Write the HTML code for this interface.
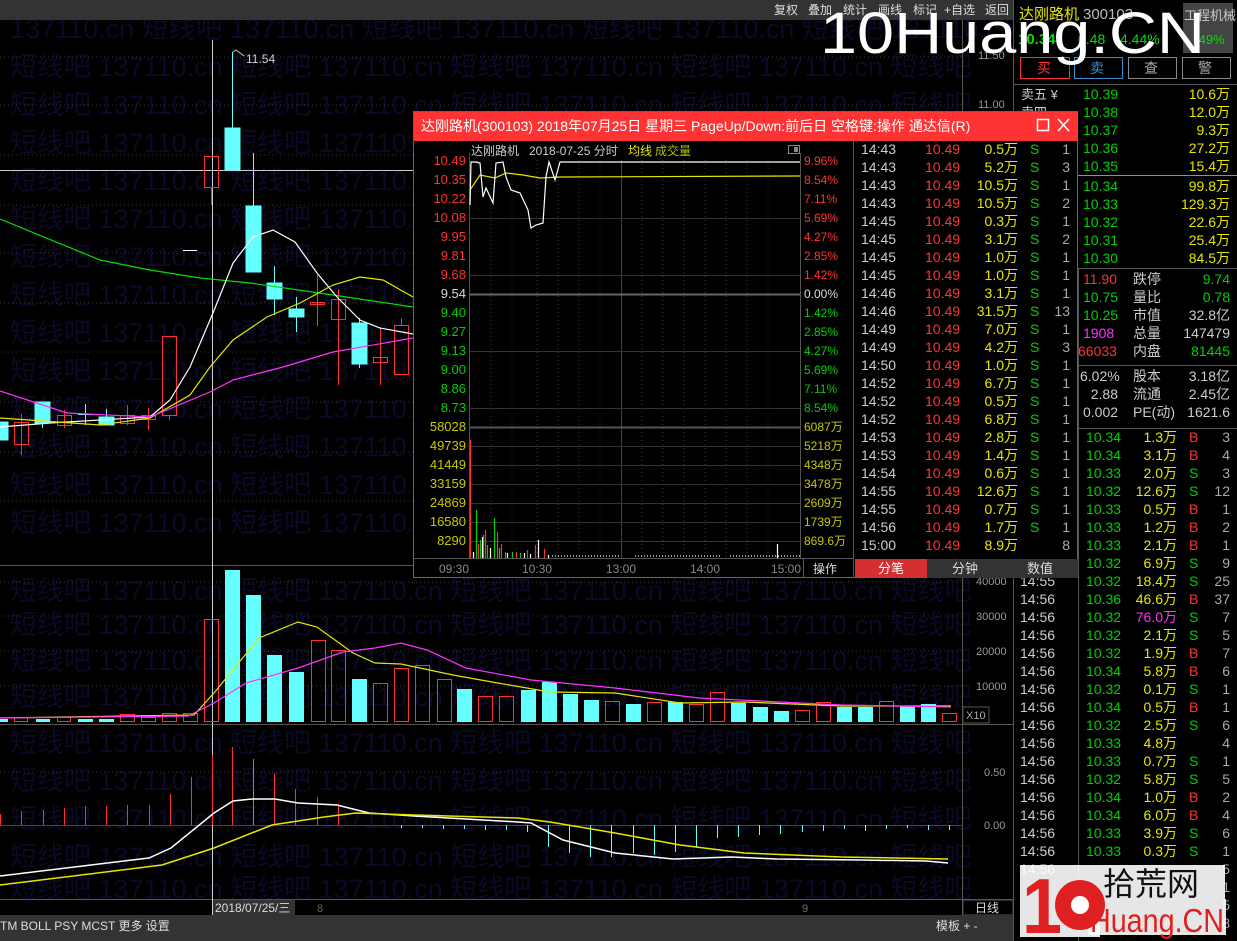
<!DOCTYPE html>
<html><head><meta charset="utf-8">
<style>
html,body{margin:0;padding:0;background:#000;width:1237px;height:941px;overflow:hidden}
svg{display:block}
text{font-family:"Liberation Sans","Noto Sans CJK SC",sans-serif}
</style></head><body>
<svg width="1237" height="941" viewBox="0 0 1237 941" xmlns="http://www.w3.org/2000/svg">
<rect width="1237" height="941" fill="#000"/>
<!-- watermark -->
<g fill="#0a0a28" font-size="27">
<text x="10" y="38">137110.cn 短线吧 137110.cn 短线吧 137110.cn 短线吧 137110.cn 短线吧 137110.cn</text>
<text x="10" y="76">短线吧 137110.cn 短线吧 137110.cn 短线吧 137110.cn 短线吧 137110.cn 短线吧</text>
<text x="10" y="114">短线吧 137110.cn 短线吧 137110.cn 短线吧 137110.cn 短线吧 137110.cn 短线吧</text>
<text x="10" y="152">短线吧 137110.cn 短线吧 137110.cn 短线吧 137110.cn 短线吧 137110.cn 短线吧</text>
<text x="10" y="190">短线吧 137110.cn 短线吧 137110.cn 短线吧 137110.cn 短线吧 137110.cn 短线吧</text>
<text x="10" y="228">短线吧 137110.cn 短线吧 137110.cn 短线吧 137110.cn 短线吧 137110.cn 短线吧</text>
<text x="10" y="266">短线吧 137110.cn 短线吧 137110.cn 短线吧 137110.cn 短线吧 137110.cn 短线吧</text>
<text x="10" y="304">短线吧 137110.cn 短线吧 137110.cn 短线吧 137110.cn 短线吧 137110.cn 短线吧</text>
<text x="10" y="342">短线吧 137110.cn 短线吧 137110.cn 短线吧 137110.cn 短线吧 137110.cn 短线吧</text>
<text x="10" y="380">短线吧 137110.cn 短线吧 137110.cn 短线吧 137110.cn 短线吧 137110.cn 短线吧</text>
<text x="10" y="418">短线吧 137110.cn 短线吧 137110.cn 短线吧 137110.cn 短线吧 137110.cn 短线吧</text>
<text x="10" y="456">短线吧 137110.cn 短线吧 137110.cn 短线吧 137110.cn 短线吧 137110.cn 短线吧</text>
<text x="10" y="494">短线吧 137110.cn 短线吧 137110.cn 短线吧 137110.cn 短线吧 137110.cn 短线吧</text>
<text x="10" y="532">短线吧 137110.cn 短线吧 137110.cn 短线吧 137110.cn 短线吧 137110.cn 短线吧</text>
<text x="10" y="600">短线吧 137110.cn 短线吧 137110.cn 短线吧 137110.cn 短线吧 137110.cn 短线吧</text>
<text x="10" y="634">短线吧 137110.cn 短线吧 137110.cn 短线吧 137110.cn 短线吧 137110.cn 短线吧</text>
<text x="10" y="670">短线吧 137110.cn 短线吧 137110.cn 短线吧 137110.cn 短线吧 137110.cn 短线吧</text>
<text x="10" y="706">短线吧 137110.cn 短线吧 137110.cn 短线吧 137110.cn 短线吧 137110.cn 短线吧</text>
<text x="10" y="752">短线吧 137110.cn 短线吧 137110.cn 短线吧 137110.cn 短线吧 137110.cn 短线吧</text>
<text x="10" y="790">短线吧 137110.cn 短线吧 137110.cn 短线吧 137110.cn 短线吧 137110.cn 短线吧</text>
<text x="10" y="828">短线吧 137110.cn 短线吧 137110.cn 短线吧 137110.cn 短线吧 137110.cn 短线吧</text>
<text x="10" y="866">短线吧 137110.cn 短线吧 137110.cn 短线吧 137110.cn 短线吧 137110.cn 短线吧</text>
<text x="10" y="898">短线吧 137110.cn 短线吧 137110.cn 短线吧 137110.cn 短线吧 137110.cn 短线吧</text>
</g>

<!-- top bar -->
<rect x="0" y="0" width="1013" height="20" fill="#333"/>
<g fill="#ddd" font-size="12">
<text x="774" y="14">复权</text><text x="808" y="14">叠加</text><text x="843" y="14">统计</text><text x="878" y="14">画线</text><text x="913" y="14">标记</text><text x="944" y="14">+自选</text><text x="985" y="14">返回</text>
</g>

<!-- main grid -->
<g stroke="#333" stroke-dasharray="1,3" stroke-width="1">
<line x1="0" y1="57" x2="962" y2="57"/><line x1="0" y1="105" x2="962" y2="105"/><line x1="0" y1="155" x2="962" y2="155"/><line x1="0" y1="205" x2="962" y2="205"/><line x1="0" y1="253" x2="962" y2="253"/><line x1="0" y1="303" x2="962" y2="303"/><line x1="0" y1="352" x2="962" y2="352"/><line x1="0" y1="402" x2="962" y2="402"/><line x1="0" y1="452" x2="962" y2="452"/><line x1="0" y1="501" x2="962" y2="501"/>
<line x1="0" y1="582" x2="962" y2="582"/><line x1="0" y1="616" x2="962" y2="616"/><line x1="0" y1="651" x2="962" y2="651"/><line x1="0" y1="686" x2="962" y2="686"/>
<line x1="0" y1="772" x2="962" y2="772"/>
</g>
<g stroke="#555" stroke-width="1">
<line x1="0" y1="724.5" x2="1013" y2="724.5"/>
<line x1="0" y1="565.5" x2="1013" y2="565.5"/>
<line x1="0" y1="899.5" x2="1013" y2="899.5"/>
<line x1="962.5" y1="20" x2="962.5" y2="915"/>
<line x1="1013.5" y1="0" x2="1013.5" y2="941"/>
</g>
<line x1="0" y1="825.5" x2="962" y2="825.5" stroke="#444"/>
<g fill="#999" font-size="11">
<text x="978" y="59">11.50</text><text x="978" y="108">11.00</text>
<text x="976" y="585">40000</text><text x="976" y="620">30000</text><text x="976" y="655">20000</text><text x="976" y="690">10000</text>
<text x="984" y="776">0.50</text><text x="984" y="829">0.00</text>
</g>
<rect x="963" y="707" width="26" height="16" fill="none" stroke="#555"/>
<text x="966" y="719" fill="#aaa" font-size="11">X10</text>

<!-- crosshair -->
<line x1="212.5" y1="40" x2="212.5" y2="915" stroke="#ccc"/>
<line x1="0" y1="170.5" x2="413" y2="170.5" stroke="#ccc"/>

<!-- candles -->
<g stroke="#ff3232" fill="none" stroke-width="1">
<line x1="21.5" y1="414" x2="21.5" y2="455"/><rect x="14.5" y="422.5" width="14" height="22"/>
<line x1="64.5" y1="410" x2="64.5" y2="428"/><rect x="57.5" y="415.5" width="14" height="10"/>
<line x1="127.5" y1="405" x2="127.5" y2="425"/><rect x="120.5" y="415.5" width="14" height="8"/>
<line x1="148.5" y1="408" x2="148.5" y2="430"/><rect x="141.5" y="415.5" width="14" height="4"/>
<rect x="162.5" y="336.5" width="14" height="79"/><line x1="169.5" y1="415" x2="169.5" y2="420"/>
<line x1="211.5" y1="187" x2="211.5" y2="205"/><rect x="204.5" y="156.5" width="14" height="31"/>
<line x1="317.5" y1="275" x2="317.5" y2="326"/><rect x="310.5" y="302.5" width="14" height="2"/>
<line x1="338.5" y1="289" x2="338.5" y2="385"/><rect x="331.5" y="299.5" width="14" height="20"/>
<line x1="380.5" y1="328" x2="380.5" y2="385"/><rect x="373.5" y="357.5" width="14" height="5"/>
<line x1="401.5" y1="318" x2="401.5" y2="325"/><rect x="394.5" y="325.5" width="14" height="49"/>
</g>
<g fill="#66ffff" stroke="#66ffff">
<rect x="0" y="422" width="8" height="18"/>
<rect x="35" y="402" width="15" height="21"/><line x1="42.5" y1="423" x2="42.5" y2="428"/>
<line x1="78" y1="414.5" x2="93" y2="414.5"/><line x1="85.5" y1="404" x2="85.5" y2="425"/>
<rect x="99" y="417" width="15" height="8"/><line x1="106.5" y1="409" x2="106.5" y2="417"/>
<rect x="225" y="128" width="15" height="42"/><line x1="232.5" y1="52" x2="232.5" y2="128"/>
<rect x="246" y="206" width="15" height="66"/><line x1="253.5" y1="153" x2="253.5" y2="206"/>
<rect x="267" y="283" width="15" height="16"/><line x1="274.5" y1="266" x2="274.5" y2="315"/>
<rect x="289" y="309" width="15" height="8"/><line x1="296.5" y1="297" x2="296.5" y2="332"/>
<rect x="352" y="323" width="15" height="41"/><line x1="359.5" y1="318" x2="359.5" y2="368"/>
</g>
<line x1="183" y1="250.5" x2="197" y2="250.5" stroke="#fff"/>
<path d="M233 52 L236 50 L244 56" stroke="#ccc" fill="none"/>
<text x="246" y="63" fill="#ccc" font-size="12">11.54</text>
<g fill="none" stroke-width="1.2">
<polyline stroke="#00e000" points="0,219 100,260 150,270 200,278 250,283 333,295 413,307"/>
<polyline stroke="#fff" points="0,427 50,423 150,417 170,400 190,367 213,313 233,263 253,237 273,230 295,242 317,273 337,297 360,320 380,328 413,334"/>
<polyline stroke="#e6e600" points="0,418 100,425 150,418 190,395 210,367 233,340 267,317 300,303 333,285 360,277 383,280 413,297"/>
<polyline stroke="#ff32ff" points="0,391 67,413 150,417 210,392 233,380 283,367 333,352 413,338"/>
</g>

<!-- volume bars -->
<g fill="#66ffff">
<rect x="0" y="719" width="8" height="3"/><rect x="36" y="719" width="14" height="3"/><rect x="78" y="719" width="15" height="3"/><rect x="99" y="719" width="15" height="3"/>
<rect x="225" y="570" width="15" height="152"/><rect x="246" y="595" width="15" height="127"/><rect x="267" y="655" width="15" height="67"/><rect x="289" y="672" width="15" height="50"/><rect x="352" y="679" width="15" height="43"/><rect x="457" y="689" width="15" height="33"/><rect x="521" y="690" width="15" height="32"/><rect x="542" y="682" width="15" height="40"/><rect x="563" y="694" width="15" height="28"/><rect x="584" y="700" width="15" height="22"/><rect x="626" y="704" width="15" height="18"/><rect x="668" y="702" width="15" height="20"/><rect x="731" y="703" width="15" height="19"/><rect x="753" y="707" width="15" height="15"/><rect x="774" y="711" width="15" height="11"/><rect x="837" y="707" width="15" height="15"/><rect x="858" y="707" width="15" height="15"/><rect x="900" y="706" width="15" height="16"/><rect x="921" y="704" width="15" height="18"/>
</g>
<g fill="none" stroke="#ff3232">
<rect x="14.5" y="717.5" width="13" height="4"/><rect x="57.5" y="717.5" width="13" height="4"/><rect x="120.5" y="714.5" width="14" height="7"/><rect x="141.5" y="717.5" width="14" height="4"/><rect x="162.5" y="713.5" width="14" height="8"/><rect x="183.5" y="713.5" width="14" height="8"/>
<rect x="204.5" y="619.5" width="14" height="102"/><rect x="311.5" y="640.5" width="14" height="81"/><rect x="331.5" y="650.5" width="14" height="71"/><rect x="373.5" y="683.5" width="14" height="38"/><rect x="394.5" y="668.5" width="14" height="53"/><rect x="415.5" y="665.5" width="14" height="56"/><rect x="437.5" y="679.5" width="14" height="42"/><rect x="478.5" y="696.5" width="14" height="25"/><rect x="499.5" y="696.5" width="14" height="25"/><rect x="605.5" y="701.5" width="14" height="20"/><rect x="647.5" y="702.5" width="14" height="19"/><rect x="689.5" y="704.5" width="14" height="17"/><rect x="710.5" y="692.5" width="14" height="29"/><rect x="795.5" y="710.5" width="14" height="11"/><rect x="816.5" y="702.5" width="14" height="19"/><rect x="879.5" y="701.5" width="14" height="20"/><rect x="942.5" y="713.5" width="14" height="8"/>
</g>
<g fill="none" stroke-width="1.2">
<polyline stroke="#e6e600" points="0,718 194,715 214,693 259,638 298,622 317,627 353,653 375,663 401,664 453,675 492,682 550,692 615,693 680,703 744,702 841,706 951,706"/>
<polyline stroke="#ff32ff" points="0,718 188,716 214,703 246,683 298,668 343,652 375,648 401,643 427,650 466,668 531,680 615,688 699,698 841,705 951,707"/>
</g>

<!-- MACD bars -->
<g stroke="#ff3232">
<line x1="0.5" y1="814" x2="0.5" y2="825"/><line x1="21.5" y1="811" x2="21.5" y2="825"/><line x1="43.5" y1="810" x2="43.5" y2="825"/><line x1="64.5" y1="808" x2="64.5" y2="825"/><line x1="85.5" y1="806" x2="85.5" y2="825"/><line x1="106.5" y1="806" x2="106.5" y2="825"/><line x1="127.5" y1="805" x2="127.5" y2="825"/><line x1="149.5" y1="805" x2="149.5" y2="825"/><line x1="170.5" y1="794" x2="170.5" y2="825"/><line x1="191.5" y1="777" x2="191.5" y2="825"/><line x1="212.5" y1="755" x2="212.5" y2="825"/><line x1="232.5" y1="747" x2="232.5" y2="825"/><line x1="274.5" y1="774" x2="274.5" y2="825"/><line x1="295.5" y1="789" x2="295.5" y2="825"/><line x1="317.5" y1="797" x2="317.5" y2="825"/><line x1="338.5" y1="804" x2="338.5" y2="825"/>
</g>
<line x1="253.5" y1="759" x2="253.5" y2="825" stroke="#888"/>
<g stroke="#66ffff">
<line x1="401.5" y1="825" x2="401.5" y2="828"/><line x1="422.5" y1="825" x2="422.5" y2="828"/><line x1="443.5" y1="825" x2="443.5" y2="829"/><line x1="464.5" y1="825" x2="464.5" y2="829"/><line x1="485.5" y1="825" x2="485.5" y2="830"/><line x1="506.5" y1="825" x2="506.5" y2="830"/><line x1="527.5" y1="825" x2="527.5" y2="832"/><line x1="548.5" y1="825" x2="548.5" y2="847"/><line x1="569.5" y1="825" x2="569.5" y2="853"/><line x1="590.5" y1="825" x2="590.5" y2="857"/><line x1="611.5" y1="825" x2="611.5" y2="857"/><line x1="633.5" y1="825" x2="633.5" y2="853"/><line x1="654.5" y1="825" x2="654.5" y2="855"/><line x1="675.5" y1="825" x2="675.5" y2="852"/><line x1="696.5" y1="825" x2="696.5" y2="847"/><line x1="717.5" y1="825" x2="717.5" y2="838"/><line x1="738.5" y1="825" x2="738.5" y2="837"/><line x1="759.5" y1="825" x2="759.5" y2="835"/><line x1="780.5" y1="825" x2="780.5" y2="834"/><line x1="802.5" y1="825" x2="802.5" y2="832"/><line x1="823.5" y1="825" x2="823.5" y2="831"/><line x1="844.5" y1="825" x2="844.5" y2="829"/><line x1="865.5" y1="825" x2="865.5" y2="831"/><line x1="886.5" y1="825" x2="886.5" y2="829"/><line x1="907.5" y1="825" x2="907.5" y2="828"/><line x1="928.5" y1="825" x2="928.5" y2="830"/><line x1="949.5" y1="825" x2="949.5" y2="830"/>
</g>
<g fill="none" stroke-width="1.5">
<polyline stroke="#fff" points="0,876 149,858 171,848 214,813 233,801 252,799 275,799 298,803 337,805 369,813 414,816 518,822 531,823 563,840 615,853 673,859 731,857 777,859 861,860 926,861 948,863"/>
<polyline stroke="#e6e600" points="0,885 162,865 214,848 272,825 324,817 356,813 414,815 518,818 550,822 615,833 680,845 744,853 841,857 948,859"/>
</g>

<!-- date axis -->
<rect x="213" y="900" width="82" height="15" fill="#333"/>
<text x="215" y="912" fill="#ddd" font-size="12">2018/07/25/三</text>
<text x="317" y="912" fill="#665" font-size="11">8</text>
<text x="802" y="912" fill="#777" font-size="11">9</text>
<rect x="963" y="900" width="50" height="15" fill="#000" stroke="#555"/>
<text x="975" y="912" fill="#ddd" font-size="12">日线</text>

<!-- bottom toolbar -->
<rect x="0" y="915" width="1013" height="26" fill="#333"/>
<text x="0" y="930" fill="#ddd" font-size="12">TM BOLL PSY MCST 更多 设置</text>
<text x="936" y="930" fill="#ddd" font-size="12">模板  +   -</text>

<!-- right panel -->
<text x="1019" y="19" fill="#e6e600" font-size="15">达刚路机</text>
<text x="1083" y="19" fill="#bbb" font-size="15">300103</text>
<rect x="1183" y="3" width="50" height="50" fill="#444"/>
<text x="1184" y="20" fill="#ccc" font-size="13">工程机械</text>
<text x="1018" y="44" fill="#00e000" font-size="15" font-weight="bold">10.34</text>
<text x="1078" y="44" fill="#00e000" font-size="14">0.48</text>
<text x="1120" y="44" fill="#00e000" font-size="14">4.44%</text>
<text x="1195" y="44" fill="#00e000" font-size="13">.49%</text>
<rect x="1020.5" y="57.5" width="49" height="21" fill="none" stroke="#ff3232"/>
<rect x="1074.5" y="57.5" width="48" height="21" fill="none" stroke="#3a8ecf"/>
<rect x="1128.5" y="57.5" width="48" height="21" fill="none" stroke="#888"/>
<rect x="1182.5" y="57.5" width="48" height="21" fill="none" stroke="#888"/>
<text x="1037" y="73" fill="#ff3232" font-size="14">买</text>
<text x="1090" y="73" fill="#3a8ecf" font-size="14">卖</text>
<text x="1144" y="73" fill="#aaa" font-size="14">查</text>
<text x="1198" y="73" fill="#aaa" font-size="14">警</text>
<line x1="1014" y1="84.5" x2="1237" y2="84.5" stroke="#555"/>
<text x="1021" y="99" fill="#ccc" font-size="13">卖五 ¥</text>
<text x="1021" y="117" fill="#ccc" font-size="13">卖四</text>
<g fill="#00d000" font-size="14">
<text x="1083" y="99">10.39</text><text x="1083" y="117">10.38</text><text x="1083" y="135">10.37</text><text x="1083" y="153">10.36</text><text x="1083" y="171">10.35</text>
<text x="1083" y="191">10.34</text><text x="1083" y="209">10.33</text><text x="1083" y="227">10.32</text><text x="1083" y="245">10.31</text><text x="1083" y="263">10.30</text>
</g>
<g fill="#e6e600" font-size="14" text-anchor="end">
<text x="1230" y="99">10.6万</text><text x="1230" y="117">12.0万</text><text x="1230" y="135">9.3万</text><text x="1230" y="153">27.2万</text><text x="1230" y="171">15.4万</text>
<text x="1230" y="191">99.8万</text><text x="1230" y="209">129.3万</text><text x="1230" y="227">22.6万</text><text x="1230" y="245">25.4万</text><text x="1230" y="263">84.5万</text>
</g>
<line x1="1078" y1="175.5" x2="1237" y2="175.5" stroke="#d08030"/>
<line x1="1078" y1="268.5" x2="1237" y2="268.5" stroke="#555"/>
<line x1="1078" y1="365.5" x2="1237" y2="365.5" stroke="#555"/>
<line x1="1078" y1="428.5" x2="1237" y2="428.5" stroke="#555"/>
<line x1="1078.5" y1="268" x2="1078.5" y2="941" stroke="#555"/>
<g font-size="14">
<text x="1083" y="284" fill="#ff3232">11.90</text><text x="1133" y="284" fill="#ccc">跌停</text><text x="1230" y="284" fill="#00d000" text-anchor="end">9.74</text>
<text x="1083" y="302" fill="#00d000">10.75</text><text x="1133" y="302" fill="#ccc">量比</text><text x="1230" y="302" fill="#00d000" text-anchor="end">0.78</text>
<text x="1083" y="320" fill="#00d000">10.25</text><text x="1133" y="320" fill="#ccc">市值</text><text x="1230" y="320" fill="#ccc" text-anchor="end">32.8亿</text>
<text x="1083" y="338" fill="#ff32ff">1908</text><text x="1133" y="338" fill="#ccc">总量</text><text x="1230" y="338" fill="#ccc" text-anchor="end">147479</text>
<text x="1078" y="356" fill="#ff3232">66033</text><text x="1133" y="356" fill="#ccc">内盘</text><text x="1230" y="356" fill="#00d000" text-anchor="end">81445</text>
<text x="1080" y="381" fill="#ccc">6.02%</text><text x="1133" y="381" fill="#ccc">股本</text><text x="1230" y="381" fill="#ccc" text-anchor="end">3.18亿</text>
<text x="1118" y="399" fill="#ccc" text-anchor="end">2.88</text><text x="1133" y="399" fill="#ccc">流通</text><text x="1230" y="399" fill="#ccc" text-anchor="end">2.45亿</text>
<text x="1083" y="417" fill="#ccc">0.002</text><text x="1133" y="417" fill="#ccc">PE(动)</text><text x="1230" y="417" fill="#ccc" text-anchor="end">1621.6</text>
</g>
<!-- right ticks -->
<g font-size="14">
<g fill="#ccc">
<text x="1020" y="586">14:55</text><text x="1020" y="604">14:56</text><text x="1020" y="622">14:56</text><text x="1020" y="640">14:56</text><text x="1020" y="658">14:56</text><text x="1020" y="676">14:56</text><text x="1020" y="694">14:56</text><text x="1020" y="712">14:56</text><text x="1020" y="730">14:56</text><text x="1020" y="748">14:56</text><text x="1020" y="766">14:56</text><text x="1020" y="784">14:56</text><text x="1020" y="802">14:56</text><text x="1020" y="820">14:56</text><text x="1020" y="838">14:56</text><text x="1020" y="856">14:56</text><text x="1020" y="874">14:56</text>
</g>
<g fill="#00d000">
<text x="1086" y="442">10.34</text><text x="1086" y="460">10.34</text><text x="1086" y="478">10.33</text><text x="1086" y="496">10.32</text><text x="1086" y="514">10.33</text><text x="1086" y="532">10.33</text><text x="1086" y="550">10.33</text><text x="1086" y="568">10.32</text><text x="1086" y="586">10.32</text><text x="1086" y="604">10.36</text><text x="1086" y="622">10.32</text><text x="1086" y="640">10.32</text><text x="1086" y="658">10.32</text><text x="1086" y="676">10.34</text><text x="1086" y="694">10.32</text><text x="1086" y="712">10.34</text><text x="1086" y="730">10.32</text><text x="1086" y="748">10.33</text><text x="1086" y="766">10.33</text><text x="1086" y="784">10.32</text><text x="1086" y="802">10.34</text><text x="1086" y="820">10.34</text><text x="1086" y="838">10.33</text><text x="1086" y="856">10.33</text>
</g>
<g fill="#e6e600" text-anchor="end">
<text x="1177" y="442">1.3万</text><text x="1177" y="460">3.1万</text><text x="1177" y="478">2.0万</text><text x="1177" y="496">12.6万</text><text x="1177" y="514">0.5万</text><text x="1177" y="532">1.2万</text><text x="1177" y="550">2.1万</text><text x="1177" y="568">6.9万</text><text x="1177" y="586">18.4万</text><text x="1177" y="604">46.6万</text><text x="1177" y="622" fill="#ff32ff">76.0万</text><text x="1177" y="640">2.1万</text><text x="1177" y="658">1.9万</text><text x="1177" y="676">5.8万</text><text x="1177" y="694">0.1万</text><text x="1177" y="712">0.5万</text><text x="1177" y="730">2.5万</text><text x="1177" y="748">4.8万</text><text x="1177" y="766">0.7万</text><text x="1177" y="784">5.8万</text><text x="1177" y="802">1.0万</text><text x="1177" y="820">6.0万</text><text x="1177" y="838">3.9万</text><text x="1177" y="856">0.3万</text>
</g>
<g>
<text x="1189" y="442" fill="#ff3232">B</text><text x="1189" y="460" fill="#ff3232">B</text><text x="1189" y="478" fill="#00d000">S</text><text x="1189" y="496" fill="#00d000">S</text><text x="1189" y="514" fill="#ff3232">B</text><text x="1189" y="532" fill="#ff3232">B</text><text x="1189" y="550" fill="#ff3232">B</text><text x="1189" y="568" fill="#00d000">S</text><text x="1189" y="586" fill="#00d000">S</text><text x="1189" y="604" fill="#ff3232">B</text><text x="1189" y="622" fill="#00d000">S</text><text x="1189" y="640" fill="#00d000">S</text><text x="1189" y="658" fill="#ff3232">B</text><text x="1189" y="676" fill="#ff3232">B</text><text x="1189" y="694" fill="#00d000">S</text><text x="1189" y="712" fill="#ff3232">B</text><text x="1189" y="730" fill="#00d000">S</text><text x="1189" y="766" fill="#00d000">S</text><text x="1189" y="784" fill="#00d000">S</text><text x="1189" y="802" fill="#ff3232">B</text><text x="1189" y="820" fill="#ff3232">B</text><text x="1189" y="838" fill="#00d000">S</text><text x="1189" y="856" fill="#00d000">S</text>
</g>
<g fill="#aaa" text-anchor="end">
<text x="1230" y="442">3</text><text x="1230" y="460">4</text><text x="1230" y="478">3</text><text x="1230" y="496">12</text><text x="1230" y="514">1</text><text x="1230" y="532">2</text><text x="1230" y="550">1</text><text x="1230" y="568">9</text><text x="1230" y="586">25</text><text x="1230" y="604">37</text><text x="1230" y="622">7</text><text x="1230" y="640">5</text><text x="1230" y="658">7</text><text x="1230" y="676">6</text><text x="1230" y="694">1</text><text x="1230" y="712">1</text><text x="1230" y="730">6</text><text x="1230" y="748">4</text><text x="1230" y="766">1</text><text x="1230" y="784">5</text><text x="1230" y="802">2</text><text x="1230" y="820">4</text><text x="1230" y="838">6</text><text x="1230" y="856">1</text><text x="1230" y="874">5</text><text x="1230" y="892">1</text><text x="1230" y="910">5</text><text x="1230" y="928">8</text>
</g>
</g>

<!-- popup -->
<rect x="413.5" y="111.5" width="664" height="466" fill="#000" stroke="#666"/>
<rect x="414" y="112" width="664" height="29" fill="#ff3333"/>
<text x="421" y="131" fill="#fff" font-size="14">达刚路机(300103) 2018年07月25日 星期三 PageUp/Down:前后日 空格键:操作 通达信(R)</text>
<rect x="1037.5" y="119.5" width="11" height="11" fill="none" stroke="#fff" stroke-width="1.5"/>
<path d="M1058 119 L1069 131 M1069 119 L1058 131" stroke="#fff" stroke-width="1.5"/>
<text x="471" y="155" fill="#ccc" font-size="12">达刚路机</text>
<text x="529" y="155" fill="#ccc" font-size="12">2018-07-25 分时</text>
<text x="628" y="155" fill="#e6e600" font-size="12">均线</text>
<text x="655" y="155" fill="#b0c000" font-size="12">成交量</text>
<rect x="788.5" y="145.5" width="11" height="8" fill="none" stroke="#888"/>
<rect x="794" y="147" width="4" height="5" fill="#888"/>
<line x1="853.5" y1="141" x2="853.5" y2="578" stroke="#555"/>
<line x1="469.5" y1="153" x2="469.5" y2="558" stroke="#555"/>
<line x1="800.5" y1="153" x2="800.5" y2="558" stroke="#555"/>
<g stroke="#333" stroke-dasharray="1,3">
<line x1="491" y1="160" x2="491" y2="558"/><line x1="512" y1="160" x2="512" y2="558"/><line x1="537" y1="160" x2="537" y2="558"/><line x1="558" y1="160" x2="558" y2="558"/><line x1="579" y1="160" x2="579" y2="558"/><line x1="600" y1="160" x2="600" y2="558"/><line x1="642" y1="160" x2="642" y2="558"/><line x1="663" y1="160" x2="663" y2="558"/><line x1="684" y1="160" x2="684" y2="558"/><line x1="705" y1="160" x2="705" y2="558"/><line x1="726" y1="160" x2="726" y2="558"/><line x1="747" y1="160" x2="747" y2="558"/><line x1="768" y1="160" x2="768" y2="558"/>
</g>
<line x1="621.5" y1="160" x2="621.5" y2="558" stroke="#444"/>
<g stroke="#333">
<line x1="470" y1="218.5" x2="800" y2="218.5"/><line x1="470" y1="275.5" x2="800" y2="275.5"/><line x1="470" y1="351.5" x2="800" y2="351.5"/><line x1="470" y1="408.5" x2="800" y2="408.5"/>
<line x1="470" y1="446.5" x2="800" y2="446.5"/><line x1="470" y1="465.5" x2="800" y2="465.5"/><line x1="470" y1="484.5" x2="800" y2="484.5"/><line x1="470" y1="503.5" x2="800" y2="503.5"/><line x1="470" y1="522.5" x2="800" y2="522.5"/><line x1="470" y1="541.5" x2="800" y2="541.5"/>
</g>
<line x1="470" y1="294.5" x2="800" y2="294.5" stroke="#666" stroke-width="2"/>
<line x1="470" y1="427.5" x2="800" y2="427.5" stroke="#555" stroke-width="2"/>
<line x1="414" y1="558.5" x2="853" y2="558.5" stroke="#555"/>
<g font-size="13" text-anchor="end">
<text x="466" y="165" fill="#ff3232">10.49</text><text x="466" y="184" fill="#ff3232">10.35</text><text x="466" y="203" fill="#ff3232">10.22</text><text x="466" y="222" fill="#ff3232">10.08</text><text x="466" y="241" fill="#ff3232">9.95</text><text x="466" y="260" fill="#ff3232">9.81</text><text x="466" y="279" fill="#ff3232">9.68</text><text x="466" y="298" fill="#ddd">9.54</text>
<text x="466" y="317" fill="#00d000">9.40</text><text x="466" y="336" fill="#00d000">9.27</text><text x="466" y="355" fill="#00d000">9.13</text><text x="466" y="374" fill="#00d000">9.00</text><text x="466" y="393" fill="#00d000">8.86</text><text x="466" y="412" fill="#00d000">8.73</text>
<g fill="#c8c800"><text x="466" y="431">58028</text><text x="466" y="450">49739</text><text x="466" y="469">41449</text><text x="466" y="488">33159</text><text x="466" y="507">24869</text><text x="466" y="526">16580</text><text x="466" y="545">8290</text></g>
</g>
<g font-size="12">
<text x="804" y="165" fill="#ff3232">9.96%</text><text x="804" y="184" fill="#ff3232">8.54%</text><text x="804" y="203" fill="#ff3232">7.11%</text><text x="804" y="222" fill="#ff3232">5.69%</text><text x="804" y="241" fill="#ff3232">4.27%</text><text x="804" y="260" fill="#ff3232">2.85%</text><text x="804" y="279" fill="#ff3232">1.42%</text><text x="804" y="298" fill="#ddd">0.00%</text>
<text x="804" y="317" fill="#00d000">1.42%</text><text x="804" y="336" fill="#00d000">2.85%</text><text x="804" y="355" fill="#00d000">4.27%</text><text x="804" y="374" fill="#00d000">5.69%</text><text x="804" y="393" fill="#00d000">7.11%</text><text x="804" y="412" fill="#00d000">8.54%</text>
<g fill="#c8c800"><text x="804" y="431">6087万</text><text x="804" y="450">5218万</text><text x="804" y="469">4348万</text><text x="804" y="488">3478万</text><text x="804" y="507">2609万</text><text x="804" y="526">1739万</text><text x="804" y="545">869.6万</text></g>
</g>
<polyline fill="none" stroke="#e6e600" stroke-width="1.2" points="470,190 480,175 495,178 506,173 523,175 540,178 560,177 800,176"/>
<polyline fill="none" stroke="#fff" stroke-width="1.2" points="470,205 471,162 476,162 480,163 483,197 486,188 493,203 496,163 503,162 506,177 511,190 520,193 528,210 531,228 536,225 543,223 546,177 549,162 555,180 560,162 800,162"/>
<!-- popup volume bars -->
<g stroke-width="1.2">
<line x1="470.5" y1="440" x2="470.5" y2="558" stroke="#ff3232"/>
<g stroke="#00d000"><line x1="476.5" y1="510" x2="476.5" y2="558"/><line x1="480.5" y1="540" x2="480.5" y2="558"/><line x1="483.5" y1="535" x2="483.5" y2="558"/><line x1="487.5" y1="545" x2="487.5" y2="558"/><line x1="494.5" y1="518" x2="494.5" y2="558"/><line x1="499.5" y1="548" x2="499.5" y2="558"/><line x1="505.5" y1="552" x2="505.5" y2="558"/><line x1="512.5" y1="552" x2="512.5" y2="558"/><line x1="520.5" y1="553" x2="520.5" y2="558"/></g>
<g stroke="#ff3232"><line x1="478.5" y1="544" x2="478.5" y2="558"/><line x1="485.5" y1="530" x2="485.5" y2="558"/><line x1="497.5" y1="532" x2="497.5" y2="558"/><line x1="501.5" y1="544" x2="501.5" y2="558"/><line x1="516.5" y1="552" x2="516.5" y2="558"/><line x1="527.5" y1="550" x2="527.5" y2="558"/><line x1="535.5" y1="545" x2="535.5" y2="558"/><line x1="544.5" y1="549" x2="544.5" y2="558"/></g>
<g stroke="#fff"><line x1="473.5" y1="552" x2="473.5" y2="558"/><line x1="482.5" y1="537" x2="482.5" y2="558"/><line x1="490.5" y1="548" x2="490.5" y2="558"/><line x1="507.5" y1="553" x2="507.5" y2="558"/><line x1="524.5" y1="553" x2="524.5" y2="558"/><line x1="530.5" y1="554" x2="530.5" y2="558"/><line x1="538.5" y1="540" x2="538.5" y2="558"/><line x1="548.5" y1="555" x2="548.5" y2="558"/><line x1="777.5" y1="544" x2="777.5" y2="558"/></g>
<path d="M552 556 H620 M635 556 H720 M730 556 H800" stroke="#fff" stroke-dasharray="1,2"/>
</g>
<g fill="#888" font-size="12">
<text x="439" y="573">09:30</text><text x="522" y="573">10:30</text><text x="606" y="573">13:00</text><text x="690" y="573">14:00</text><text x="771" y="573">15:00</text>
</g>
<line x1="803.5" y1="559" x2="803.5" y2="578" stroke="#555"/>
<text x="813" y="573" fill="#ddd" font-size="12">操作</text>
<rect x="855" y="559" width="72" height="19" fill="#d43030"/>
<rect x="927" y="559" width="151" height="19" fill="#333"/>
<text x="878" y="573" fill="#fff" font-size="13">分笔</text>
<text x="952" y="573" fill="#ddd" font-size="13">分钟</text>
<text x="1027" y="573" fill="#ddd" font-size="13">数值</text>
<!-- popup ticks -->
<g font-size="14">
<g fill="#ccc">
<text x="861" y="154">14:43</text><text x="861" y="172">14:43</text><text x="861" y="190">14:43</text><text x="861" y="208">14:43</text><text x="861" y="226">14:45</text><text x="861" y="244">14:45</text><text x="861" y="262">14:45</text><text x="861" y="280">14:45</text><text x="861" y="298">14:46</text><text x="861" y="316">14:46</text><text x="861" y="334">14:49</text><text x="861" y="352">14:49</text><text x="861" y="370">14:50</text><text x="861" y="388">14:52</text><text x="861" y="406">14:52</text><text x="861" y="424">14:52</text><text x="861" y="442">14:53</text><text x="861" y="460">14:53</text><text x="861" y="478">14:54</text><text x="861" y="496">14:55</text><text x="861" y="514">14:55</text><text x="861" y="532">14:56</text><text x="861" y="550">15:00</text>
</g>
<g fill="#ff3232">
<text x="925" y="154">10.49</text><text x="925" y="172">10.49</text><text x="925" y="190">10.49</text><text x="925" y="208">10.49</text><text x="925" y="226">10.49</text><text x="925" y="244">10.49</text><text x="925" y="262">10.49</text><text x="925" y="280">10.49</text><text x="925" y="298">10.49</text><text x="925" y="316">10.49</text><text x="925" y="334">10.49</text><text x="925" y="352">10.49</text><text x="925" y="370">10.49</text><text x="925" y="388">10.49</text><text x="925" y="406">10.49</text><text x="925" y="424">10.49</text><text x="925" y="442">10.49</text><text x="925" y="460">10.49</text><text x="925" y="478">10.49</text><text x="925" y="496">10.49</text><text x="925" y="514">10.49</text><text x="925" y="532">10.49</text><text x="925" y="550">10.49</text>
</g>
<g fill="#e6e600" text-anchor="end">
<text x="1018" y="154">0.5万</text><text x="1018" y="172">5.2万</text><text x="1018" y="190">10.5万</text><text x="1018" y="208">10.5万</text><text x="1018" y="226">0.3万</text><text x="1018" y="244">3.1万</text><text x="1018" y="262">1.0万</text><text x="1018" y="280">1.0万</text><text x="1018" y="298">3.1万</text><text x="1018" y="316">31.5万</text><text x="1018" y="334">7.0万</text><text x="1018" y="352">4.2万</text><text x="1018" y="370">1.0万</text><text x="1018" y="388">6.7万</text><text x="1018" y="406">0.5万</text><text x="1018" y="424">6.8万</text><text x="1018" y="442">2.8万</text><text x="1018" y="460">1.4万</text><text x="1018" y="478">0.6万</text><text x="1018" y="496">12.6万</text><text x="1018" y="514">0.7万</text><text x="1018" y="532">1.7万</text><text x="1018" y="550">8.9万</text>
</g>
<g fill="#00d000">
<text x="1030" y="154">S</text><text x="1030" y="172">S</text><text x="1030" y="190">S</text><text x="1030" y="208">S</text><text x="1030" y="226">S</text><text x="1030" y="244">S</text><text x="1030" y="262">S</text><text x="1030" y="280">S</text><text x="1030" y="298">S</text><text x="1030" y="316">S</text><text x="1030" y="334">S</text><text x="1030" y="352">S</text><text x="1030" y="370">S</text><text x="1030" y="388">S</text><text x="1030" y="406">S</text><text x="1030" y="424">S</text><text x="1030" y="442">S</text><text x="1030" y="460">S</text><text x="1030" y="478">S</text><text x="1030" y="496">S</text><text x="1030" y="514">S</text><text x="1030" y="532">S</text>
</g>
<g fill="#aaa" text-anchor="end">
<text x="1070" y="154">1</text><text x="1070" y="172">3</text><text x="1070" y="190">1</text><text x="1070" y="208">2</text><text x="1070" y="226">1</text><text x="1070" y="244">2</text><text x="1070" y="262">1</text><text x="1070" y="280">1</text><text x="1070" y="298">1</text><text x="1070" y="316">13</text><text x="1070" y="334">1</text><text x="1070" y="352">3</text><text x="1070" y="370">1</text><text x="1070" y="388">1</text><text x="1070" y="406">1</text><text x="1070" y="424">1</text><text x="1070" y="442">1</text><text x="1070" y="460">1</text><text x="1070" y="478">1</text><text x="1070" y="496">1</text><text x="1070" y="514">1</text><text x="1070" y="532">1</text><text x="1070" y="550">8</text>
</g>
</g>

<!-- top watermark logo -->
<text x="820" y="53" fill="#fff" font-size="58" textLength="385" lengthAdjust="spacingAndGlyphs">10Huang.CN</text>

<!-- bottom-right logo -->
<rect x="1100" y="865" width="125" height="34" fill="#fff" opacity="0.9"/>
<rect x="1088" y="899" width="138" height="36" fill="#fff" opacity="0.9"/>
<rect x="1020" y="865" width="80" height="72" fill="#fff" opacity="0.9"/>
<text x="1022" y="933" fill="#e02020" font-size="78" font-weight="bold" textLength="40" lengthAdjust="spacingAndGlyphs">1</text>
<circle cx="1080" cy="905" r="25" fill="#e02020"/>
<circle cx="1080" cy="905" r="9" fill="#fff"/>
<text x="1103" y="895" fill="#111" font-size="32">拾荒网</text>
<text x="1090" y="932" fill="#e02020" font-size="33" textLength="134" lengthAdjust="spacingAndGlyphs">Huang.CN</text>
</svg>
</body></html>
